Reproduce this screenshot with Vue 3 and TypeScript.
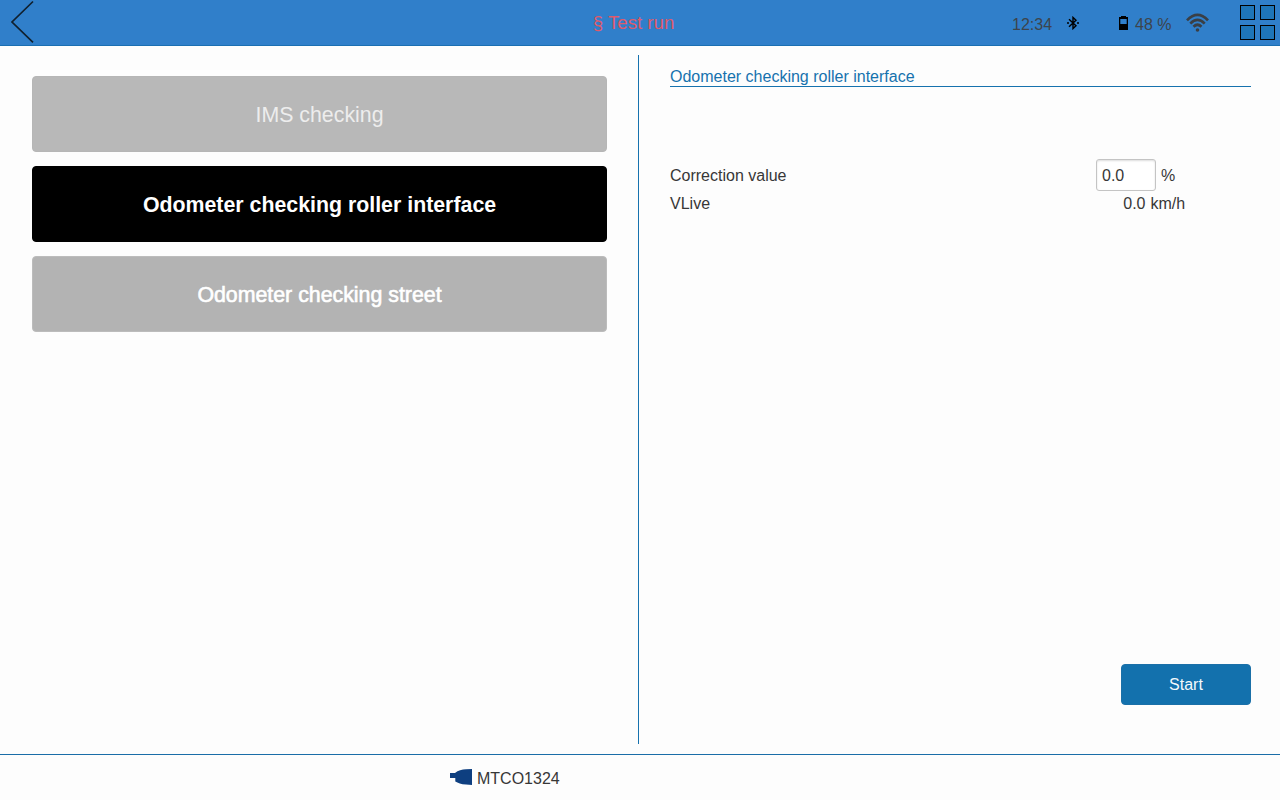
<script setup lang="ts">
import { ref } from 'vue'

interface MenuItem {
  id: string
  label: string
  state: 'disabled' | 'active' | 'normal'
}

const items: MenuItem[] = [
  { id: 'ims', label: 'IMS checking', state: 'disabled' },
  { id: 'roller', label: 'Odometer checking roller interface', state: 'active' },
  { id: 'street', label: 'Odometer checking street', state: 'normal' },
]

const correction = ref('0.0')
const liveSpeed = ref('0.0')
</script>

<template>
  <div class="screen">
    <header class="bar">
      <button class="icon-button back" aria-label="Back">
        <svg width="46" height="45" viewBox="0 0 46 45" fill="none" stroke="#10202e" stroke-width="1.7">
          <path d="M33 1.5 L12 22 L33 42.3" />
        </svg>
      </button>
      <h1 class="title">§ Test run</h1>
      <div class="status">
        <span class="clock">12:34</span>
        <svg class="bluetooth" width="12" height="14" viewBox="0 0 12 14" fill="none" stroke="#000" stroke-width="1.4">
          <path d="M2 3.2 L9 9.8 L6 12.6 V1.4 L9 4.2 L2 10.8" />
          <path d="M0 7 H2 M10 7 H12" />
        </svg>
        <svg class="battery" width="9" height="14" viewBox="0 0 9 14">
          <path d="M2 0 H7 V2 H2 Z" fill="#000" />
          <path d="M0 1 H9 V14 H0 Z M1.3 3 V8 H7.7 V3 Z" fill="#000" fill-rule="evenodd" />
        </svg>
        <span class="charge">48 %</span>
        <svg class="wifi" width="24" height="20" viewBox="0 0 24 20" fill="none" stroke="#3a3f45" stroke-width="2.7">
          <path d="M1 7.4 Q11.5 -3.6 22 7.4" />
          <path d="M4.3 10.6 Q11.5 3.2 18.7 10.6" />
          <path d="M7.5 13.8 Q11.5 9.8 15.5 13.8" />
          <circle cx="11.5" cy="17" r="1.8" fill="#3a3f45" stroke="none" />
        </svg>
      </div>
      <button class="icon-button tiles" aria-label="Menu">
        <i v-for="n in 4" :key="n" class="tile"></i>
      </button>
    </header>

    <main class="content">
      <nav class="menu">
        <button v-for="item in items" :key="item.id" class="choice" :class="item.state">
          {{ item.label }}
        </button>
      </nav>
      <section class="panel">
        <h2 class="heading">Odometer checking roller interface</h2>
        <div class="fields">
          <div class="row tall">
            <label class="name" for="correction">Correction value</label>
            <input id="correction" v-model="correction" class="entry" type="text" />
            <span class="unit">%</span>
          </div>
          <div class="row">
            <span class="name">VLive</span>
            <span class="reading">{{ liveSpeed }}</span>
            <span class="unit">km/h</span>
          </div>
        </div>
        <button class="start">Start</button>
      </section>
    </main>

    <footer class="foot">
      <svg class="plug" width="22" height="16" viewBox="0 0 22 16" fill="#0e3f80">
        <path d="M0 4 H5 C8 1.5 12 0.5 16 0.3 L22 0 V16 L16 15.6 C11 15.3 8 14 5.3 12.5 V9 H0 Z" />
      </svg>
      <span class="device">MTCO1324</span>
    </footer>
  </div>
</template>

<style>
body {
  background: #fdfdfd;
}
</style>

<style scoped>
.screen {
  display: flex;
  flex-direction: column;
  width: 1280px;
  height: 800px;
  overflow: hidden;
  box-sizing: border-box;
  background: #fdfdfd;
  color: #373737;
  font-family: 'Liberation Sans', Arial, sans-serif;
  font-size: 16px;
  line-height: 20px;
}

button,
input {
  margin: 0;
  font: inherit;
  box-sizing: border-box;
}

.bar {
  display: grid;
  grid-template-columns: 480px 307px 1fr 40px;
  height: 46px;
  box-sizing: border-box;
  border-bottom: 1px solid #1a6fb2;
  background: #307fca;
}

.icon-button {
  padding: 0;
  border: 0;
  background: none;
}

.back {
  width: 46px;
  height: 45px;
}

.back svg {
  display: block;
}

.title {
  height: 45px;
  margin: 0;
  color: #df5a6c;
  font-size: 18.67px;
  font-weight: 400;
  line-height: 46px;
  text-align: center;
}

.status {
  display: flex;
  align-items: flex-start;
  padding-left: 225px;
  color: #3d444c;
}

.clock,
.charge {
  margin-top: 15px;
  white-space: nowrap;
}

.clock {
  width: 55px;
}

.bluetooth {
  margin: 16px 40px 0 0;
}

.battery {
  margin: 16px 7px 0 0;
}

.charge {
  width: 51px;
}

.wifi {
  margin-top: 13px;
}

.tiles {
  display: grid;
  grid-template-columns: 15px 15px;
  grid-auto-rows: 15px;
  gap: 5px;
  align-content: start;
  padding-top: 5px;
}

.tile {
  box-sizing: border-box;
  border: 1px solid #000;
  background: #1e75b8;
}

.content {
  display: flex;
  height: 689px;
  margin: 9px 0 10px;
}

.menu {
  display: flex;
  flex-direction: column;
  gap: 14px;
  width: 639px;
  box-sizing: border-box;
  padding: 21px 31px 0 32px;
  border-right: 1px solid #1672ae;
}

.choice {
  height: 76px;
  padding: 2px 0 0;
  border: 1px solid #b3b3b3;
  border-radius: 4px;
  background: #b3b3b3;
  color: #fff;
  font-size: 21.33px;
}

.choice.disabled {
  border-color: #b6b6b6;
  background: #b8b8b8;
  color: #ededed;
}

.choice.active {
  border-color: #000;
  background: #000;
  font-weight: 700;
}

.choice.normal {
  border-color: #bcbcbc;
  -webkit-text-stroke: 0.6px #fff;
}

.panel {
  display: flex;
  flex: 1;
  flex-direction: column;
  padding: 11px 29px 39px 31px;
}

.heading {
  height: 21px;
  box-sizing: border-box;
  margin: 0;
  border-bottom: 1px solid #1672ae;
  color: #1672ae;
  font-size: 16px;
  font-weight: 400;
  line-height: 22px;
}

.fields {
  flex: 1;
  padding-top: 72px;
}

.row {
  display: grid;
  grid-template-columns: 426px 49.5px 1fr;
  align-items: center;
  height: 24px;
  line-height: 22px;
}

.row.tall {
  grid-template-columns: 426px 60px 1fr;
  height: 32px;
}

.name,
.reading,
.unit {
  padding-top: 1px;
}

.entry {
  width: 60px;
  height: 32px;
  padding: 2px 5px 0;
  border: 1px solid #c4c4c4;
  border-radius: 3px;
  outline: 0;
  background: #fff;
  box-shadow: inset 0 1px 2px #ddd;
  color: #373737;
}

.reading {
  text-align: right;
}

.unit {
  padding-left: 5px;
}

.start {
  align-self: flex-end;
  width: 130px;
  height: 41px;
  border: 1px solid #1b70a8;
  border-radius: 4px;
  background: #1371ad;
  color: #f4f9fc;
}

.foot {
  display: flex;
  flex: 1;
  align-items: flex-start;
  gap: 5px;
  border-top: 1px solid #1a6da8;
  padding-left: 450px;
}

.plug {
  margin-top: 14px;
}

.device {
  margin-top: 14px;
}
</style>
